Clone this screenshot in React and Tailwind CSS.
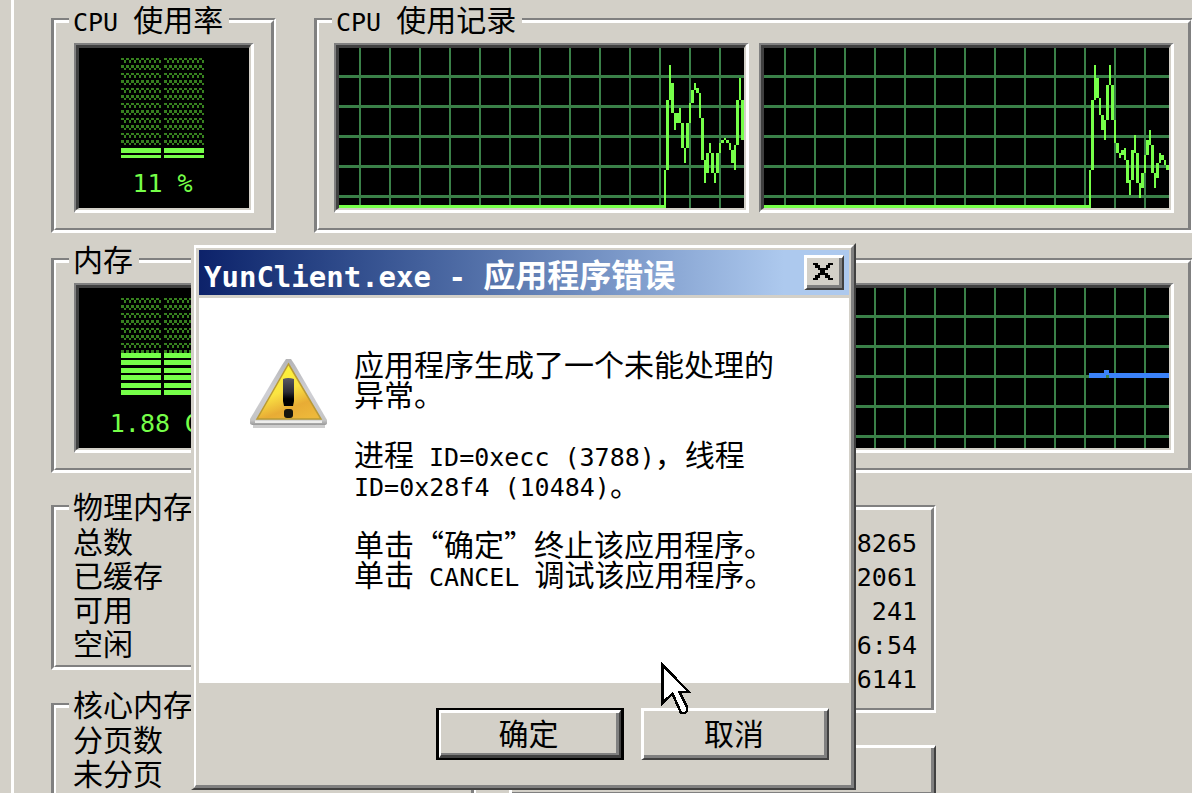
import React from "react";

const CPU0 = [
  [122, 160], [52, 122], [17, 52], [35, 65], [65, 82], [65, 75], [60, 75], [75, 100],
  [100, 115], [75, 100], [55, 75], [42, 55], [35, 42], [40, 45], [45, 70], [70, 112],
  [112, 135], [105, 125], [95, 105], [105, 125], [125, 135], [105, 125], [95, 105], [92, 95],
  [90, 92], [92, 95], [95, 102], [102, 115], [97, 122], [52, 97], [30, 52], [52, 92],
];

const CPU1 = [
  [122, 160], [52, 122], [17, 52], [30, 50], [50, 67], [67, 82], [72, 92], [37, 72],
  [17, 37], [37, 72], [72, 95], [95, 105], [105, 110], [102, 107], [100, 112], [112, 135],
  [132, 147], [102, 132], [87, 105], [105, 135], [135, 150], [125, 140], [107, 125], [92, 107],
  [82, 97], [97, 125], [125, 140], [115, 130], [105, 115], [107, 112], [112, 117], [117, 122],
];

function Latin({ children }) {
  return (
    <span className="font-['DejaVu_Sans_Mono','Liberation_Mono',monospace] text-[25px] leading-[0px] whitespace-pre">
      {children}
    </span>
  );
}

function Group({ title, className = "", children }) {
  return (
    <section
      className={`border-t-2 border-r-2 border-b-3 border-l-3 border-t-[#808080] border-l-[#808080] border-r-white border-b-white ${className}`}
    >
      <div className="h-full border-t-3 border-r-3 border-b-2 border-l-2 border-t-white border-l-white border-r-[#808080] border-b-[#808080]">
        {title && (
          <h2 className="-mt-5 ml-[13px] w-fit bg-[#d3d0c8] pr-1.5 pl-1 leading-[30px] whitespace-nowrap">
            {title}
          </h2>
        )}
        {children}
      </div>
    </section>
  );
}

function Sunken({ className = "", children }) {
  return (
    <div
      className={`border-t-2 border-r-3 border-b-3 border-l-2 border-t-[#808080] border-l-[#808080] border-r-white border-b-white ${className}`}
    >
      <div className="border-t-3 border-r-2 border-b-2 border-l-3 border-t-[#404040] border-l-[#404040] border-r-[#d3d0c8] border-b-[#d3d0c8]">
        <div className="h-40 overflow-hidden bg-black">{children}</div>
      </div>
    </div>
  );
}

function Meter({ id, empty, bars, label }) {
  return (
    <div className="flex flex-col items-center pt-2.5 pr-[3px]">
      <svg width="83" height="100" shapeRendering="crispEdges" aria-hidden="true">
        <defs>
          <pattern id={id} width="5" height="15" patternUnits="userSpaceOnUse">
            <path d="M0 0h3v2h-3z M3 2h2v3h-2z M0 7h3v3h-3z M3 10h2v2h-2z" fill="#37801f" />
          </pattern>
        </defs>
        <rect width="40" height={empty} fill={`url(#${id})`} />
        <g transform="translate(43 0)">
          <rect width="40" height={empty} fill={`url(#${id})`} />
        </g>
        {bars.map(([y, h]) => (
          <path key={y} d={`M0 ${y}h40v${h}h-40z M43 ${y}h40v${h}h-40z`} fill="#76ff49" />
        ))}
      </svg>
      <p className="mt-1.5 leading-[30px] text-[#76ff49]">
        <Latin>{label}</Latin>
      </p>
    </div>
  );
}

function Graph({ width, offset, label, children }) {
  const columns = [];
  for (let x = offset; x < width; x += 30) columns.push(x);
  return (
    <svg
      viewBox={`0 0 ${width} 160`}
      preserveAspectRatio="none"
      shapeRendering="crispEdges"
      role="img"
      aria-label={label}
      className="block h-full w-full"
    >
      {columns.map((x) => (
        <rect key={x} x={x} y="0" width="2" height="160" fill="#3a8048" />
      ))}
      {[27, 57, 87, 117, 147].map((y) => (
        <rect key={y} x="0" y={y} width={width} height="3" fill="#3a8048" />
      ))}
      {children}
    </svg>
  );
}

function CpuGraph({ data, label }) {
  return (
    <Graph width={405} offset={20} label={label}>
      <rect x="0" y="157" width="327" height="3" fill="#76ff49" />
      {data.map(([top, bottom], i) => (
        <rect
          key={i}
          x={325 + Math.floor(i / 2) * 5 + (i % 2) * 2}
          y={top}
          width={i % 2 ? 3 : 2}
          height={bottom - top}
          fill="#76ff49"
        />
      ))}
    </Graph>
  );
}

function Warning() {
  return (
    <svg width="78" height="70" viewBox="0 0 78 70" role="img" aria-label="警告">
      <defs>
        <linearGradient id="warnFill" x1="0.3" y1="0" x2="0.75" y2="1">
          <stop offset="0" stopColor="#fdf735" />
          <stop offset="0.45" stopColor="#fbe443" />
          <stop offset="0.75" stopColor="#e8ac35" />
          <stop offset="1" stopColor="#edb83a" />
        </linearGradient>
        <linearGradient id="warnEdge" x1="0" y1="0" x2="0" y2="1">
          <stop offset="0" stopColor="#b4b4b6" />
          <stop offset="0.5" stopColor="#cfcfd4" />
          <stop offset="0.93" stopColor="#c4c4c4" />
          <stop offset="1" stopColor="#999999" />
        </linearGradient>
        <linearGradient id="warnMark" x1="0" y1="0" x2="0" y2="1">
          <stop offset="0" stopColor="#5a5a64" />
          <stop offset="0.5" stopColor="#2c2c34" />
          <stop offset="0.75" stopColor="#000000" />
        </linearGradient>
      </defs>
      <rect x="3" y="66" width="72" height="4" fill="#cdcdcd" />
      <path d="M36 1h5l4 6 32 55v3q0 2-3 2H4q-4 0-4-2v-4L32 7z" fill="url(#warnEdge)" />
      <path d="M5 62.500h67v2.500H5z" fill="#eeeeec" />
      <path d="M38.500 6 L71 61H7z" fill="url(#warnFill)" stroke="#b99a35" strokeWidth="1.500" />
      <path d="M33 21q5-2 11 0v22l-1 5h-9l-1-5z" fill="url(#warnMark)" />
      <rect x="34" y="51" width="9" height="9" rx="3" fill="#16160f" />
    </svg>
  );
}

function Cursor() {
  return (
    <svg
      width="34"
      height="54"
      viewBox="-1 -1 34 54"
      shapeRendering="crispEdges"
      aria-hidden="true"
      className="pointer-events-none absolute top-[662px] left-[660px]"
    >
      <path
        d="M1.500 2 V40 L11.500 30.500 L20 50 H24 L26 48 V44 L18.500 29 H28z"
        fill="#ffffff"
        stroke="#000000"
        strokeWidth="2.500"
      />
    </svg>
  );
}

function Dialog() {
  const raised =
    "border-t-3 border-r-2 border-b-2 border-l-3 border-t-white border-l-white border-r-[#404040] border-b-[#404040]";
  const raisedInner = "border-r-3 border-b-3 border-r-[#808080] border-b-[#808080]";
  return (
    <div
      role="alertdialog"
      aria-labelledby="dialog-title"
      aria-describedby="dialog-text"
      className="absolute top-[243px] left-[191px] w-[665px] border-t-2 border-r-2 border-b-2 border-l-3 border-t-[#d3d0c8] border-l-[#d3d0c8] border-r-[#404040] border-b-[#404040] bg-[#d3d0c8]"
    >
      <div className="border-t-3 border-r-3 border-b-3 border-l-2 border-t-white border-l-white border-r-[#808080] border-b-[#808080] pt-0.5 pr-0.5 pl-[3px]">
        <div className="flex h-[45px] items-center justify-between bg-linear-to-r from-[#0d226a] to-[#adc9ee] to-90% pr-[5px] pl-[5px]">
          <h1 id="dialog-title" className="text-[32px] leading-[32px] font-bold whitespace-nowrap text-white">
            <span className="font-['DejaVu_Sans_Mono','Liberation_Mono',monospace] text-[29px] leading-[0px] whitespace-pre">
              {"YunClient.exe - "}
            </span>
            应用程序错误
          </h1>
          <button type="button" aria-label="关闭" className={`h-[35px] w-10 bg-[#d3d0c8] ${raised}`}>
            <span className={`flex h-full items-center justify-center ${raisedInner}`}>
              <svg width="20" height="17" shapeRendering="crispEdges" aria-hidden="true">
                <path d="M0 0h5v2h-5z M15 0h5v2h-5z M2 2h5v3h-5z M13 2h4v3h-4z M5 5h10v2h-10z M7 7h5v3h-5z M5 10h10v2h-10z M2 12h5v3h-5z M12 12h5v3h-5z M0 15h5v2h-5z M15 15h5v2h-5z" />
              </svg>
            </span>
          </button>
        </div>
        <div className="mt-[3px] flex h-[385px] gap-[26px] bg-white pl-[51px]">
          <div className="pt-[60px]">
            <Warning />
          </div>
          <div id="dialog-text" className="flex flex-col gap-[30px] pt-[50px] leading-[30px] whitespace-nowrap">
            <p>
              应用程序生成了一个未能处理的
              <br />
              异常。
            </p>
            <p>
              进程<Latin>{" ID=0xecc (3788)"}</Latin>，线程
              <br />
              <Latin>ID=0x28f4 (10484)</Latin>。
            </p>
            <p>
              单击“确定”终止该应用程序。
              <br />
              单击<Latin>{" CANCEL "}</Latin>调试该应用程序。
            </p>
          </div>
        </div>
        <div className="flex justify-end gap-[17px] pt-[25px] pr-5 pb-[25px]">
          <button type="button" className="h-[52px] w-[188px] border-t-2 border-r-3 border-b-2 border-l-3 border-black">
            <span className="block h-full border-t-3 border-r-2 border-b-3 border-l-2 border-t-white border-l-white border-r-[#404040] border-b-[#404040]">
              <span className="flex h-full items-center justify-center border-r-3 border-b-2 border-r-[#808080] border-b-[#808080] pb-[3px] leading-[30px]">
                确定
              </span>
            </span>
          </button>
          <button type="button" className={`h-[52px] w-[188px] ${raised}`}>
            <span className={`flex h-full items-center justify-center pb-[3px] leading-[30px] ${raisedInner}`}>
              取消
            </span>
          </button>
        </div>
      </div>
    </div>
  );
}

export default function App() {
  return (
    <div
      lang="zh-CN"
      className="relative flex h-screen overflow-hidden bg-[#d3d0c8] pl-[11px] font-['Noto_Sans_CJK_SC',sans-serif] text-[30px] text-black"
    >
      <main className="-mr-px min-w-0 flex-1 border-l-3 border-white pt-[18px] pl-[37px]">
        <div className="flex gap-[38px]">
          <Group title={<><Latin>{"CPU "}</Latin>使用率</>} className="h-[215px] w-[225px] shrink-0">
            <Sunken className="mt-2.5 mr-[17px] ml-[18px]">
              <Meter id="cpuDots" empty={87} bars={[[90, 5], [97, 3]]} label="11 %" />
            </Sunken>
          </Group>
          <Group title={<><Latin>{"CPU "}</Latin>使用记录</>} className="h-[215px] min-w-0 flex-1">
            <div className="mt-2.5 mr-3.5 ml-[15px] flex gap-2.5">
              <Sunken className="min-w-0 flex-1">
                <CpuGraph data={CPU0} label="CPU 0" />
              </Sunken>
              <Sunken className="min-w-0 flex-1">
                <CpuGraph data={CPU1} label="CPU 1" />
              </Sunken>
            </div>
          </Group>
        </div>

        <div className="mt-[25px] flex gap-[38px]">
          <Group title="内存" className="h-[215px] w-[225px] shrink-0">
            <Sunken className="mt-2.5 mr-[17px] ml-[18px]">
              <Meter
                id="memoryDots"
                empty={55}
                bars={[[55, 5], [62, 5], [70, 5], [77, 5], [85, 5], [92, 5]]}
                label="1.88 GB"
              />
            </Sunken>
          </Group>
          <Group className="h-[215px] min-w-0 flex-1">
            <Sunken className="mt-5 mr-3.5 ml-[15px]">
              <Graph width={830} offset={25} label="内存">
                <path d="M750 85h80v5h-80z M765 82h5v3h-5z" fill="#3b82f8" />
                <rect x="767" y="87" width="3" height="3" fill="#3a8048" />
              </Graph>
            </Sunken>
          </Group>
        </div>

        <div className="mt-8 flex gap-[33px]">
          <div className="flex w-[425px] flex-col gap-[33px]">
            <Group title="物理内存" className="h-[165px]">
              <ul className="mt-[3px] ml-[17px] leading-[34px]">
                <li>总数</li>
                <li>已缓存</li>
                <li>可用</li>
                <li>空闲</li>
              </ul>
            </Group>
            <Group title="核心内存" className="h-[165px]">
              <ul className="mt-[3px] ml-[17px] leading-[34px]">
                <li>分页数</li>
                <li>未分页</li>
              </ul>
            </Group>
          </div>
          <div className="flex w-[427px] flex-col gap-8">
            <Group className="h-[208px]">
              <ul className="mt-3 mr-3.5 text-right leading-[34px]">
                <li><Latin>8265</Latin></li>
                <li><Latin>2061</Latin></li>
                <li><Latin>241</Latin></li>
                <li><Latin>6:54</Latin></li>
                <li><Latin>6141</Latin></li>
              </ul>
            </Group>
            <button
              type="button"
              aria-label="资源监视器"
              className="h-[52px] border-t-3 border-r-2 border-b-2 border-l-3 border-t-white border-l-white border-r-[#404040] border-b-[#404040]"
            >
              <span className="block h-full border-r-3 border-b-3 border-[#808080]" />
            </button>
          </div>
        </div>
      </main>
      <Dialog />
      <Cursor />
    </div>
  );
}
